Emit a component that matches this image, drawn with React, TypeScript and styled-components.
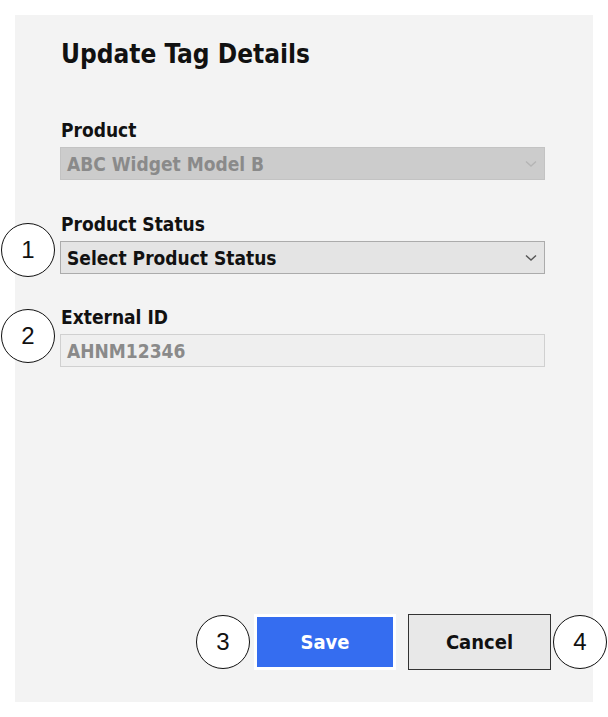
import React from "react";
import styled, { createGlobalStyle } from "styled-components";

const Global = createGlobalStyle`
  html, body { margin: 0; padding: 0; background: #ffffff; }
  body { font-family: "DejaVu Sans", Verdana, sans-serif; }
`;

const Panel = styled.div`
  position: relative;
  margin: 15px;
  width: 578px;
  height: 687px;
  box-sizing: border-box;
  background: #f3f3f3;
  padding: 23px 48px 0 45px;
  display: flex;
  flex-direction: column;
`;

const Title = styled.h1`
  margin: 0 0 0 1px;
  font-family: "DejaVu Sans", Verdana, sans-serif;
  font-stretch: condensed;
  font-weight: bold;
  font-size: 26px;
  line-height: 32px;
  color: #111;
`;

const Field = styled.div<{ $top: number }>`
  position: relative;
  margin-top: ${(p) => p.$top}px;
  display: flex;
  flex-direction: column;
`;

const Label = styled.div`
  font-family: "DejaVu Sans", Verdana, sans-serif;
  font-stretch: condensed;
  font-weight: bold;
  font-size: 19px;
  line-height: 22px;
  color: #111;
  margin-left: 1px;
  margin-bottom: 6px;
`;

const Box = styled.div<{ $variant: "disabled" | "active" | "input" }>`
  height: 33px;
  box-sizing: border-box;
  display: flex;
  align-items: center;
  justify-content: space-between;
  padding: 0 7px 0 6px;
  font-family: "DejaVu Sans", Verdana, sans-serif;
  font-stretch: condensed;
  font-weight: bold;
  font-size: 19px;
  background: ${(p) =>
    p.$variant === "disabled" ? "#cccccc" : p.$variant === "active" ? "#e4e4e4" : "#efefef"};
  border: 1.5px solid
    ${(p) =>
      p.$variant === "disabled" ? "#c3c3c3" : p.$variant === "active" ? "#ababab" : "#d0d0d0"};
  color: ${(p) => (p.$variant === "active" ? "#111" : "#8a8a8a")};
`;

const Callout = styled.div<{ $x: number; $y: number }>`
  position: absolute;
  left: ${(p) => p.$x}px;
  top: ${(p) => p.$y}px;
  width: 54px;
  height: 54px;
  border: 1.6px solid #111;
  border-radius: 50%;
  background: #fff;
  display: flex;
  align-items: center;
  justify-content: center;
  font-family: "Liberation Sans", Arial, sans-serif;
  font-size: 24px;
  color: #111;
  box-sizing: border-box;
`;

const Footer = styled.div`
  margin-top: auto;
  margin-bottom: 32px;
  display: flex;
  justify-content: flex-end;
  align-items: center;
  gap: 12px;
  margin-right: -6px;
  position: relative;
`;

const SaveButton = styled.button`
  width: 142px;
  height: 56px;
  box-sizing: border-box;
  border: 3px solid #ffffff;
  background: #356df0;
  color: #fff;
  font-family: "DejaVu Sans", Verdana, sans-serif;
  font-stretch: condensed;
  font-weight: bold;
  font-size: 20px;
`;

const CancelButton = styled.button`
  width: 143px;
  height: 56px;
  box-sizing: border-box;
  border: 1.5px solid #333;
  background: #e8e8e8;
  color: #111;
  font-family: "DejaVu Sans", Verdana, sans-serif;
  font-stretch: condensed;
  font-weight: bold;
  font-size: 20px;
`;

const Chevron = ({ color }: { color: string }) => (
  <svg width="12" height="8" viewBox="0 0 12 8">
    <polyline points="1,1.5 6,6 11,1.5" fill="none" stroke={color} strokeWidth="1.4" />
  </svg>
);

export default function App() {
  return (
    <>
      <Global />
      <Panel>
        <Title>Update Tag Details</Title>
        <Field $top={49}>
          <Label>Product</Label>
          <Box $variant="disabled">
            <span>ABC Widget Model B</span>
            <Chevron color="#b5b5b5" />
          </Box>
        </Field>
        <Field $top={33}>
          <Callout $x={-59} $y={10}>1</Callout>
          <Label>Product Status</Label>
          <Box $variant="active">
            <span>Select Product Status</span>
            <Chevron color="#555" />
          </Box>
        </Field>
        <Field $top={32}>
          <Callout $x={-59} $y={3}>2</Callout>
          <Label>External ID</Label>
          <Box $variant="input">
            <span>AHNM12346</span>
          </Box>
        </Field>
        <Footer>
          <Callout $x={136} $y={1}>3</Callout>
          <SaveButton>Save</SaveButton>
          <CancelButton>Cancel</CancelButton>
          <Callout $x={493} $y={1}>4</Callout>
        </Footer>
      </Panel>
    </>
  );
}
